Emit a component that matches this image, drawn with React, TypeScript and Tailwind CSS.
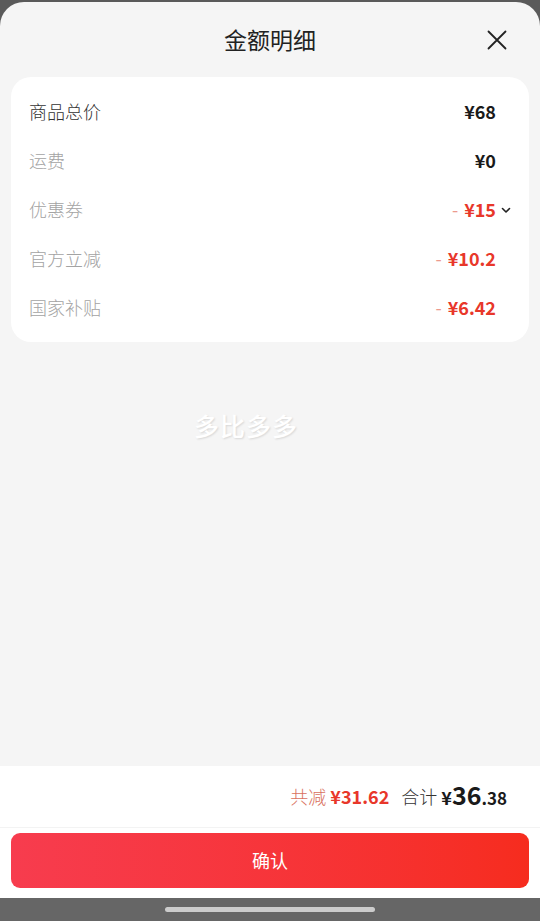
import React from "react";

const font = { fontFamily: '"Noto Sans CJK SC", "Noto Sans", sans-serif' };

function Row({
  label,
  value,
  dark,
  minus,
  chevron,
}: {
  label: string;
  value: string;
  dark?: boolean;
  minus?: boolean;
  chevron?: boolean;
}) {
  return (
    <div className="flex h-[49px] items-center justify-between">
      <span className={`text-[18px] font-light ${dark ? "text-[#333333]" : "text-[#a3a3a3]"}`}>{label}</span>
      <div className="relative mr-[15px] flex items-center">
        {minus && <span className="mr-[6px] text-[18px] text-[#ec9a8e]">-</span>}
        <span className={`text-[18px] font-semibold ${minus ? "text-[#e8372a]" : "text-[#1a1a1a]"}`}>{value}</span>
        {chevron && (
          <svg
            className="absolute left-full ml-[4px]"
            width="12"
            height="12"
            viewBox="0 0 12 12"
            fill="none"
            stroke="#222"
            strokeWidth="1.6"
            strokeLinecap="round"
            strokeLinejoin="round"
          >
            <path d="M2.5 4.5 L6 8 L9.5 4.5" />
          </svg>
        )}
      </div>
    </div>
  );
}

export default function App() {
  return (
    <div className="flex h-[921px] w-[540px] flex-col overflow-hidden bg-[#5a5a5a]" style={font}>
      <div className="mt-[2px] flex flex-1 flex-col rounded-t-[24px] bg-[#f5f5f5]">
        <div className="relative flex h-[75px] items-center justify-center">
          <span className="text-[23px] text-[#222222]">金额明细</span>
          <svg
            className="absolute right-[33px] top-[28px]"
            width="20"
            height="20"
            viewBox="0 0 20 20"
            fill="none"
            stroke="#222"
            strokeWidth="1.8"
            strokeLinecap="round"
          >
            <path d="M1.5 1.5 L18.5 18.5 M18.5 1.5 L1.5 18.5" />
          </svg>
        </div>
        <div className="mx-[11px] rounded-[20px] bg-white px-[18px] py-[10px]">
          <Row label="商品总价" value="¥68" dark />
          <Row label="运费" value="¥0" />
          <Row label="优惠券" value="¥15" minus chevron />
          <Row label="官方立减" value="¥10.2" minus />
          <Row label="国家补贴" value="¥6.42" minus />
        </div>
        <div className="mt-[65px] flex justify-center pr-[48px]">
          <span
            className="text-[25px] font-medium tracking-[1px] text-white"
            style={{ textShadow: "1px 1px 2px rgba(0,0,0,0.12)" }}
          >
            多比多多
          </span>
        </div>
      </div>
      <div className="bg-white">
        <div className="flex h-[62px] items-center justify-end border-b border-[#f3f3f3] pr-[33px]">
          <span className="text-[18px] font-light text-[#d9705e]">共减</span>
          <span className="ml-[4px] text-[18px] font-semibold text-[#e8372a]">¥31.62</span>
          <span className="ml-[12px] text-[18px] font-light text-[#333333]">合计</span>
          <span className="ml-[4px] flex items-baseline font-semibold text-[#1a1a1a]">
            <span className="text-[18px]">¥</span>
            <span className="text-[25px] leading-none">36</span>
            <span className="text-[17px]">.38</span>
          </span>
        </div>
        <div className="px-[11px] pb-[10px] pt-[5px]">
          <button className="flex h-[55px] w-full items-center justify-center rounded-[9px] bg-gradient-to-r from-[#f73c4e] to-[#f62c1e] text-[18px] text-white">
            确认
          </button>
        </div>
      </div>
      <div className="flex h-[23px] items-center justify-center bg-[#666666]">
        <div className="h-[5px] w-[210px] rounded-full bg-[#cccccc]" />
      </div>
    </div>
  );
}
